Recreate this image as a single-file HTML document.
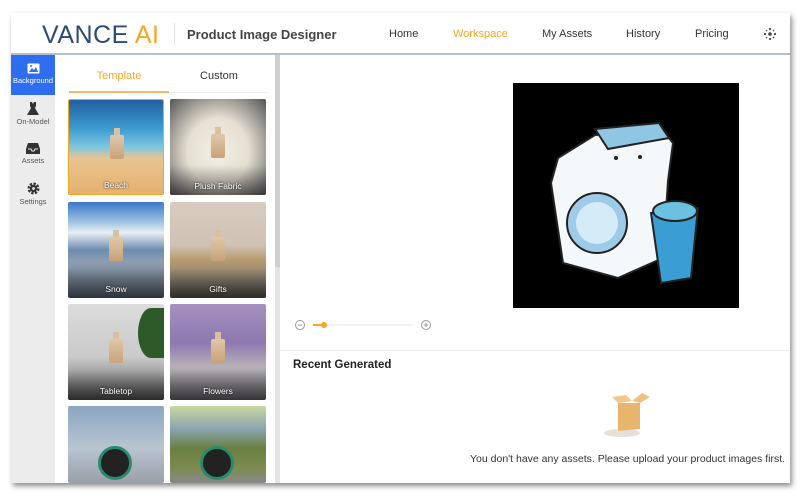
<!DOCTYPE html>
<html><head><meta charset="utf-8"><style>
*{margin:0;padding:0;box-sizing:border-box}
body{width:800px;height:496px;background:#fff;font-family:"Liberation Sans",sans-serif;position:relative;overflow:hidden}
.win{position:absolute;left:11px;top:13px;width:779px;height:470px;background:#fff;box-shadow:2px 3px 5px rgba(0,0,0,.45);overflow:hidden}
.hdr{position:absolute;left:0;top:0;width:779px;height:42px;border-bottom:2px solid #b4bfd0;background:#fff}
.logo{position:absolute;left:31px;top:8px;font-size:25px;letter-spacing:0.5px;color:#2e4a7a}
.logo b{color:#f5a623;font-weight:normal}
.sep{position:absolute;left:163px;top:10px;width:1px;height:22px;background:#e3e3e3}
.title{position:absolute;left:176px;top:14px;font-size:13px;font-weight:bold;color:#444}
.nav{position:absolute;top:15px;font-size:11px;color:#333}
.side{position:absolute;left:0;top:42px;width:44px;height:428px;background:#ececec}
.si{position:absolute;left:0;width:44px;text-align:center;font-size:7.5px;color:#555}
.panel{position:absolute;left:44px;top:42px;width:220px;height:428px;background:#fff}
.tabs{position:absolute;left:14px;top:15px;width:200px;height:24px}
.tile{position:absolute;width:96px;height:96px;border-radius:2px;overflow:hidden}
.tile span{position:absolute;left:0;bottom:4px;width:100%;text-align:center;color:#fff;font-size:8.5px;text-shadow:0 0 2px #000}
.tile i{position:absolute;left:0;bottom:0;width:100%;height:30px;background:linear-gradient(transparent,rgba(0,0,0,.5))}
.bot{position:absolute;left:41px;top:35px;width:14px;height:24px;background:linear-gradient(#e0c8a8,#c8a27a);border-radius:2px}
.bot:before{content:"";position:absolute;left:4px;top:-7px;width:6px;height:7px;background:#d8c0a0}
.scroll{position:absolute;left:264px;top:42px;width:5px;height:428px;background:#e4e4e4}
.scroll:before{content:"";position:absolute;left:0;top:0;width:5px;height:212px;background:#cfcfcf}
.main{position:absolute;left:269px;top:42px;width:510px;height:428px;background:#fff}
</style></head><body>
<div class="win">
 <div class="hdr">
  <div class="logo">VANCE <b>AI</b></div>
  <div class="sep"></div>
  <div class="title">Product Image Designer</div>
  <div class="nav" style="left:378px">Home</div>
  <div class="nav" style="left:442px;color:#f5a623">Workspace</div>
  <div class="nav" style="left:531px">My Assets</div>
  <div class="nav" style="left:615px">History</div>
  <div class="nav" style="left:684px">Pricing</div>
  <svg style="position:absolute;left:752px;top:14px" width="14" height="14" viewBox="0 0 14 14" fill="#444"><circle cx="7" cy="7" r="1.8"/><circle cx="7" cy="2" r="1.1"/><circle cx="7" cy="12" r="1.1"/><circle cx="2" cy="7" r="1.1"/><circle cx="12" cy="7" r="1.1"/><circle cx="3.5" cy="3.5" r=".8"/><circle cx="10.5" cy="3.5" r=".8"/><circle cx="3.5" cy="10.5" r=".8"/><circle cx="10.5" cy="10.5" r=".8"/></svg>
 </div>
 <div class="side">
  <div class="si" style="top:0;height:40px;background:#2f6df0;color:#fff;padding-top:8px"><svg width="13" height="11" viewBox="0 0 13 11"><rect x=".5" y=".5" width="12" height="10" fill="#fff" rx="1"/><path d="M2 9 5 5 7 7 9 4 11 9Z" fill="#2f6df0"/><circle cx="4" cy="3" r="1" fill="#2f6df0"/></svg><br>Background</div>
  <div class="si" style="top:47px"><svg width="12" height="13" viewBox="0 0 12 13"><path d="M3 0h2l1 2 1-2h2v4l-1 2 4 7H0l4-7-1-2Z" fill="#333"/></svg><br>On-Model</div>
  <div class="si" style="top:87px"><svg width="14" height="12" viewBox="0 0 14 12"><path d="M2 1h10l2 6v5H0V7Z" fill="#333"/><path d="M2 7h3l1 2h2l1-2h3" stroke="#ececec" fill="none"/></svg><br>Assets</div>
  <div class="si" style="top:127px"><svg width="13" height="13" viewBox="0 0 13 13"><circle cx="6.5" cy="6.5" r="4.5" fill="none" stroke="#333" stroke-width="3" stroke-dasharray="2.2 1.3"/><circle cx="6.5" cy="6.5" r="3.5" fill="#333"/><circle cx="6.5" cy="6.5" r="1.4" fill="#ececec"/></svg><br>Settings</div>
 </div>
 <div class="panel">
  <div class="tabs">
   <div style="position:absolute;left:0;top:0;width:100px;height:23px;border-bottom:2px solid #f5b86a;text-align:center;font-size:11px;color:#f5a623">Template</div>
   <div style="position:absolute;left:100px;top:0;width:100px;height:23px;border-bottom:1px solid #eee;text-align:center;font-size:11px;color:#333">Custom</div>
  </div>
  <div class="tile" style="left:13px;top:44px;background:linear-gradient(#1f5fa0 0%,#3d9ad0 30%,#7ec7e0 50%,#e8c490 62%,#e6b070 100%);border:1px solid #f5a623"><div class="bot"></div><i style="background:none"></i><span>Beach</span></div>
  <div class="tile" style="left:115px;top:44px;background:radial-gradient(ellipse at 50% 55%,#f3efe6 0%,#e6e0d2 45%,#8a8884 80%,#555 100%)"><div class="bot"></div><i></i><span>Plush Fabric</span></div>
  <div class="tile" style="left:13px;top:147px;background:linear-gradient(#3a78c8 0%,#9cc0e0 20%,#e8eef4 32%,#6d8cb0 50%,#8e9eb0 62%,#5c6674 100%)"><div class="bot"></div><i></i><span>Snow</span></div>
  <div class="tile" style="left:115px;top:147px;background:linear-gradient(#d8ccc0 0%,#cfc2b4 45%,#b89c70 60%,#8c8070 80%,#5a5650 100%)"><div class="bot"></div><i></i><span>Gifts</span></div>
  <div class="tile" style="left:13px;top:249px;background:linear-gradient(#dcdcdc 0%,#cacaca 55%,#9a9a9a 75%,#555 100%)"><div style="position:absolute;right:0;top:4px;width:26px;height:50px;background:#2e5a2a;border-radius:50% 0 0 50%"></div><div class="bot"></div><i></i><span>Tabletop</span></div>
  <div class="tile" style="left:115px;top:249px;background:linear-gradient(#a690c0 0%,#8d78b0 40%,#b8b0b8 65%,#6c6a70 100%)"><div class="bot"></div><i></i><span>Flowers</span></div>
  <div class="tile" style="left:13px;top:351px;height:77px;background:linear-gradient(#8ca6c4 0%,#b8c4d0 55%,#9aa0a8 100%)"><div style="position:absolute;left:30px;top:40px;width:34px;height:34px;border-radius:50%;background:#222;border:3px solid #2a8a70"></div></div>
  <div class="tile" style="left:115px;top:351px;height:77px;background:linear-gradient(#c8d8a0 0%,#8aa4b0 30%,#6a8040 55%,#7c8a50 80%,#888 100%)"><div style="position:absolute;left:30px;top:40px;width:34px;height:34px;border-radius:50%;background:#222;border:3px solid #2a8a70"></div></div>
 </div>
 <div class="scroll"></div>
 <div class="main">
  <div style="position:absolute;left:233px;top:28px;width:226px;height:225px;background:#000">
   <svg width="226" height="225" viewBox="0 0 226 225">
    <path d="M82 52 L150 48 L160 60 L155 98 L150 175 L105 195 L50 180 L38 100 L45 75 Z" fill="#f4f8fa" stroke="#222" stroke-width="2"/>
    <path d="M82 46 L146 40 L156 55 L95 66 Z" fill="#8ec6e4" stroke="#222" stroke-width="2"/>
    <circle cx="84" cy="140" r="30" fill="#9dcbe8" stroke="#222" stroke-width="2"/>
    <circle cx="84" cy="140" r="21" fill="#d4ecf8"/>
    <path d="M138 130 L185 125 L178 195 L148 200 Z" fill="#3a9ed4" stroke="#222" stroke-width="2"/>
    <ellipse cx="162" cy="128" rx="22" ry="10" fill="#6cc0e0" stroke="#222" stroke-width="2"/>
    <circle cx="103" cy="75" r="2" fill="#222"/><circle cx="127" cy="74" r="2" fill="#222"/>
   </svg>
  </div>
  <svg style="position:absolute;left:13px;top:263px" width="145" height="14" viewBox="0 0 145 14">
   <circle cx="7" cy="7" r="4.5" fill="none" stroke="#999"/><path d="M5 7h4" stroke="#999"/>
   <path d="M20 7h10" stroke="#f5a623" stroke-width="2"/><circle cx="31" cy="7" r="3" fill="#f5a623"/>
   <path d="M34 7h86" stroke="#e2e4ea"/>
   <circle cx="133" cy="7" r="4.5" fill="none" stroke="#999"/><path d="M131 7h4M133 5v4" stroke="#999"/>
  </svg>
  <div style="position:absolute;left:0;top:295px;width:510px;height:1px;background:#eee"></div>
  <div style="position:absolute;left:13px;top:304px;font-size:11.5px;font-weight:bold;color:#222">Recent Generated</div>
  <svg style="position:absolute;left:320px;top:338px" width="60" height="46" viewBox="0 0 60 46">
   <ellipse cx="22" cy="40" rx="18" ry="4" fill="#e6e0d8"/>
   <path d="M18 10 L40 10 L40 36 L18 38Z" fill="#e8b56c"/><path d="M18 10 L12 4 L26 2 L32 8Z" fill="#f2c888"/><path d="M32 8 L40 10 L50 4 L42 0Z" fill="#f0c080"/>
  </svg>
  <div style="position:absolute;left:190px;top:398px;font-size:10.5px;color:#333">You don't have any assets. Please upload your product images first.</div>
 </div>
</div>
</body></html>
